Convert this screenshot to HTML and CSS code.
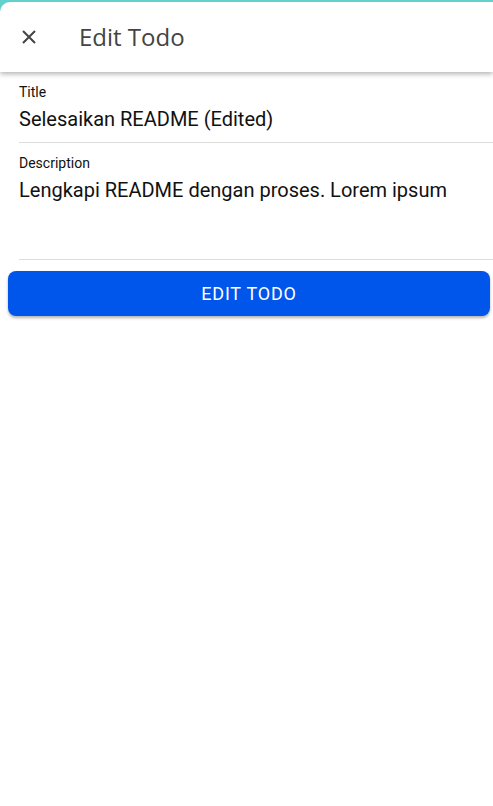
FILE: index.html
```html
<!DOCTYPE html>
<html>
<head>
<meta charset="utf-8">
<link rel="stylesheet" href="styles.css">
</head>
<body>
<div class="sheet">
  <header class="bar">
    <button class="close" aria-label="Close">
      <svg width="14" height="14" viewBox="0 0 14 14"><path d="M1 1L13 13M13 1L1 13" stroke="#444" stroke-width="2" stroke-linecap="butt"/></svg>
    </button>
    <h1 class="bar-title">Edit Todo</h1>
  </header>
  <main class="form">
    <div class="field">
      <label class="field-label">Title</label>
      <div class="field-value">Selesaikan README (Edited)</div>
    </div>
    <div class="field field-multi">
      <label class="field-label">Description</label>
      <div class="field-value">Lengkapi README dengan proses. Lorem ipsum</div>
    </div>
    <button class="submit">EDIT TODO</button>
  </main>
</div>
</body>
</html>
```
FILE: styles.css
```css
html, body {
  margin: 0;
  padding: 0;
}
body {
  background: #62d0cd;
  font-family: Roboto, "Noto Sans", sans-serif;
  overflow: hidden;
}
.sheet {
  margin-top: 2px;
  background: #fff;
  border-top-left-radius: 10px;
  height: 804px;
  overflow: hidden;
}
.bar {
  height: 70px;
  display: flex;
  align-items: center;
  box-shadow: 0 2px 5px rgba(0,0,0,0.3);
  position: relative;
  z-index: 1;
}
.close {
  border: 0;
  background: none;
  padding: 0;
  margin-left: 22px;
  width: 14px;
  height: 14px;
  display: flex;
}
.bar-title {
  margin: 0 0 2px 43px;
  font-family: "Open Sans", sans-serif;
  font-weight: 400;
  font-size: 24px;
  color: #444;
}
.form {
  padding-top: 12px;
}
.field {
  margin-left: 19px;
  border-bottom: 1px solid #ddd;
  padding-bottom: 10px;
  margin-bottom: 12px;
}
.field-label {
  display: block;
  font-size: 14px;
  line-height: 16px;
  color: #111;
}
.field-value {
  font-size: 20px;
  line-height: 26px;
  margin-top: 6px;
  color: #111;
}
.field-multi {
  height: 105px;
  box-sizing: border-box;
  margin-bottom: 11px;
}
.submit {
  display: block;
  margin: 0 3px 0 8px;
  width: calc(100% - 11px);
  height: 45px;
  border: 0;
  border-radius: 8px;
  background: #0055ea;
  color: #fff;
  font-family: Roboto, sans-serif;
  font-size: 18px;
  letter-spacing: 0.8px;
  box-shadow: 0 2px 3px rgba(0,0,0,0.3);
}
```
